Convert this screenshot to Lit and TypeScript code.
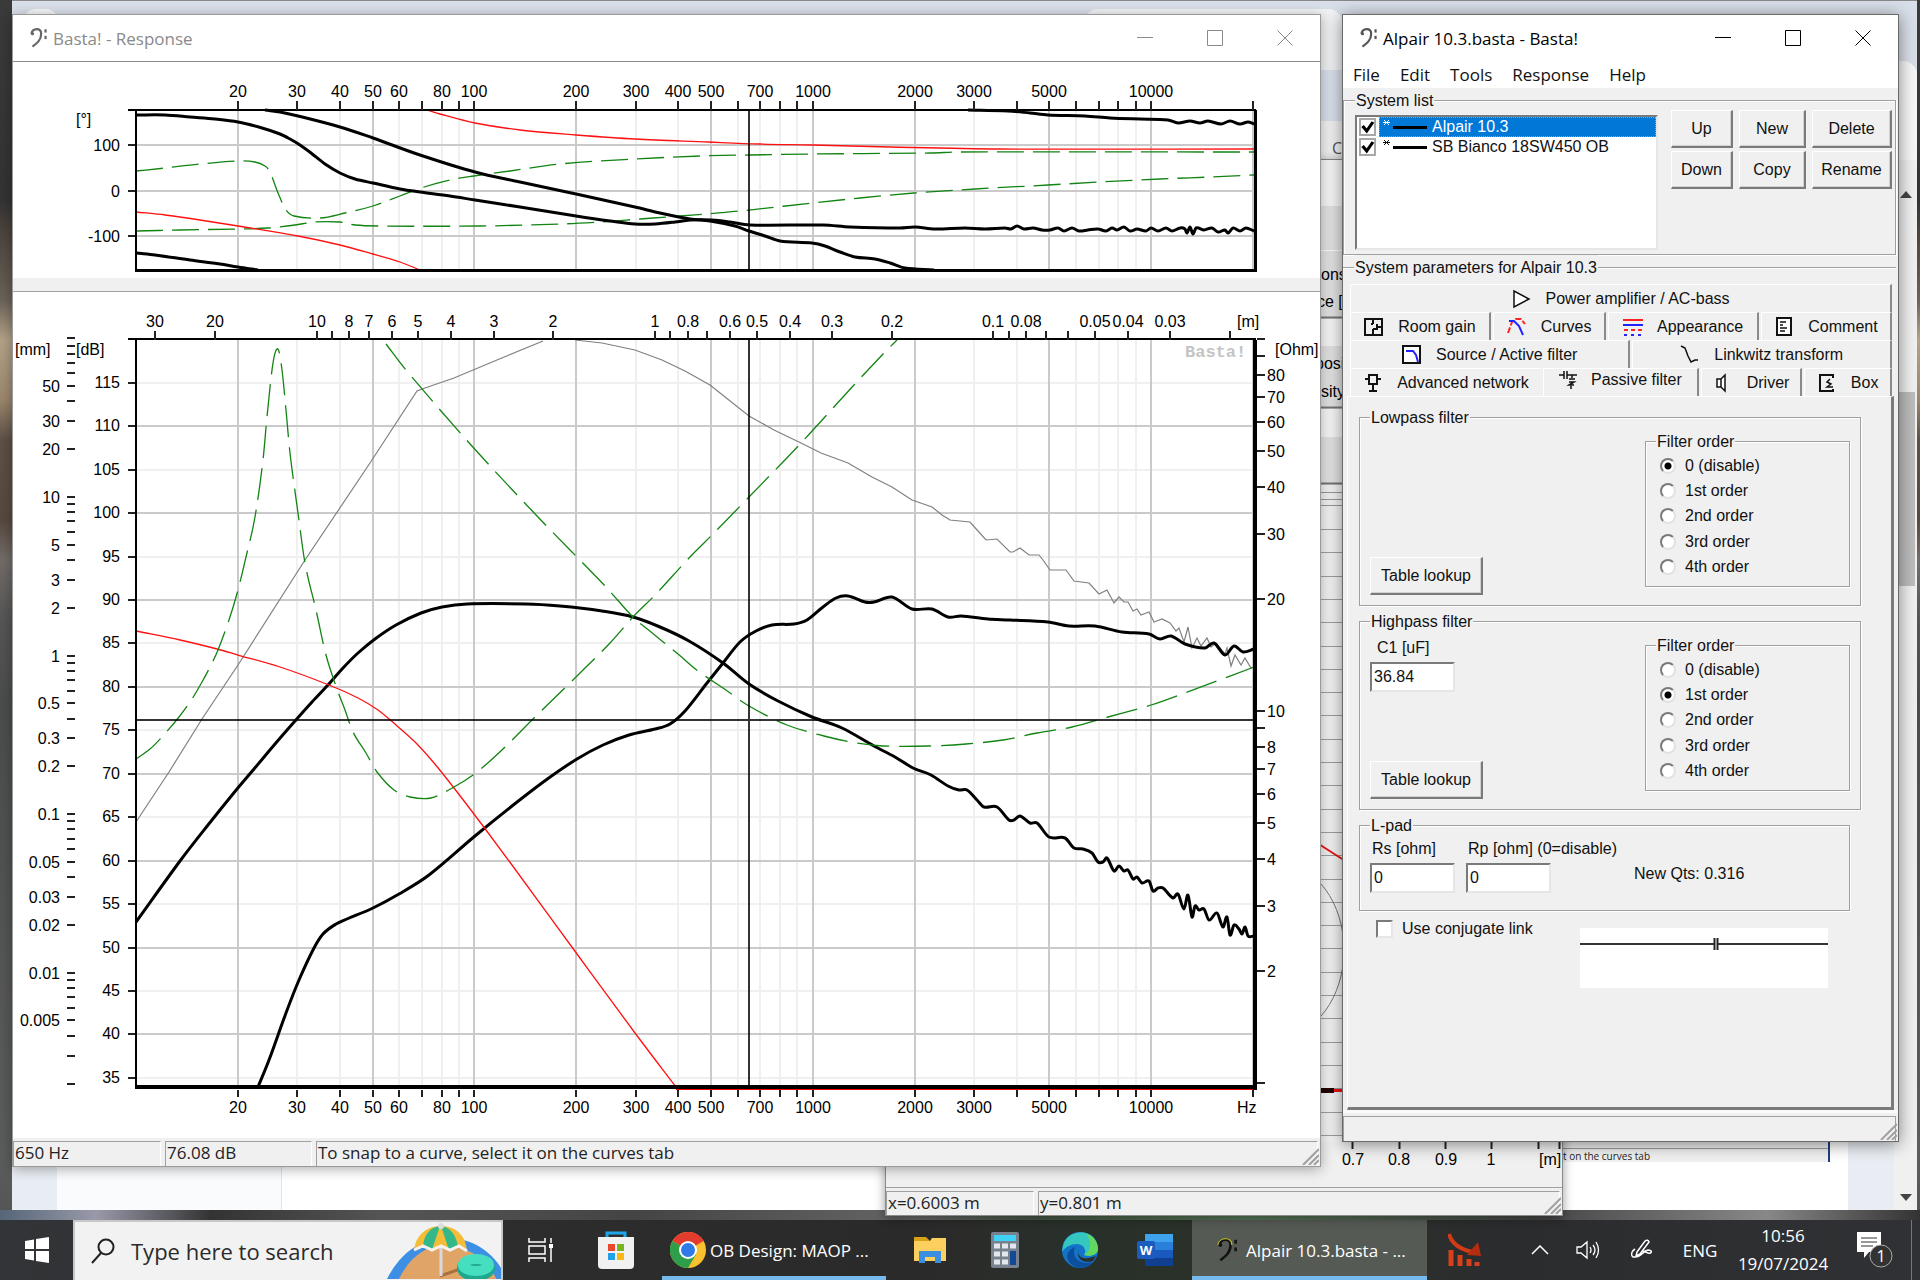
import { LitElement, html, svg, css } from "lit";
import { customElement } from "lit/decorators.js";

type Pt = [number, number];

/* ---------- scales shared by both charts ---------- */
const LEFT = 136;
const RIGHT = 1254;
const xf = (hz: number) => LEFT + 338.4 * Math.log10(hz / 10);
const xm = (m: number) => 655 - 338.4 * Math.log10(m);
const yDeg = (d: number) => 190.5 - d * 0.451;
const yDb = (d: number) => 382.7 + (115 - d) * 8.69;
const yMm = (v: number) => 655.5 - 158.6 * Math.log10(v);
const yOhm = (v: number) => 1083 - 372 * Math.log10(v);
const px = (v: number) => Math.round(v);

const decades = (from: number, to: number): number[] => {
  const out: number[] = [];
  for (let e = -3; e <= 4; e++)
    for (let k = 1; k <= 9; k++) {
      const v = k * 10 ** e;
      if (v >= from * 0.999 && v <= to * 1.001) out.push(v);
    }
  return out;
};

const FREQS = decades(20, 20000);
const FREQ_LABELS = [20, 30, 40, 50, 60, 80, 100, 200, 300, 400, 500, 700, 1000, 2000, 3000, 5000, 10000];
const isMajor = (f: number) => /^[125]/.test(String(f));

const P = (s: string): Pt[] => s.trim().split(/\s+/).map((p) => p.split(",").map(Number) as Pt);
const line = (pts: Pt[]) => "M" + pts.map((p) => p.join(" ")).join("L");
const curve = (pts: Pt[]) => {
  let d = `M${pts[0][0]} ${pts[0][1]}`;
  for (let i = 0; i < pts.length - 1; i++) {
    const a = pts[Math.max(0, i - 1)], b = pts[i], c = pts[i + 1], e = pts[Math.min(pts.length - 1, i + 2)];
    const lim = (c[0] - b[0]) / 3;
    const s1 = (c[1] - a[1]) / Math.max(1, c[0] - a[0]);
    const s2 = (e[1] - b[1]) / Math.max(1, e[0] - b[0]);
    d += `C${b[0] + lim} ${(b[1] + s1 * lim).toFixed(1)} ${c[0] - lim} ${(c[1] - s2 * lim).toFixed(1)} ${c[0]} ${c[1]}`;
  }
  return d;
};

/* ---------- phase curves ---------- */
const phaseBlack = [
  P("136,115 165,115 190,117 215,119 238,122 262,128 280,134 290,139 300,145 311,153 325,164 340,173 355,179 373,183 400,189 420,192 450,196 475,200 520,207 576,216 610,221 635,224 655,224 675,222 690,220 712,220 730,222 750,225 823,225 850,227 900,228 915,227 935,229 965,228 985,229 1005,228 1011,229 1017,226 1024,229 1033,228 1042,230 1050,230 1058,228 1064,231 1072,228 1079,231 1088,230 1098,229 1106,231 1112,228 1117,230 1124,227 1130,231 1137,229 1146,231 1151,228 1158,231 1166,228 1172,231 1180,228 1185,229 1187,233 1190,227 1193,234 1196,228 1204,230 1212,228 1218,232 1225,230 1228,233 1233,228 1240,231 1246,228 1254,231"),
  P("265,110 280,112 298,116 340,127 373,138 420,155 475,172 520,182 576,194 635,207 660,213 690,219 710,221 735,226 749,231 765,236 780,241 812,243 825,246 840,252 855,257 875,259 890,263 905,268 934,270"),
  P("136,253 155,255 190,260 220,264 238,267 258,270"),
  P("968,110 1008,111 1030,113 1048,115 1085,116 1110,118 1140,119 1168,120 1178,123 1190,121 1200,123 1208,121 1221,124 1230,121 1240,124 1248,122 1254,124"),
];
const phaseRed = [
  P("427,110 440,114 475,123 520,130 576,135 635,139 708,142 760,144 812,145 890,147 1000,149 1254,149"),
  P("136,212 165,215 200,220 238,226 298,236 340,245 373,254 400,262 420,270"),
];
const phaseGreen = [
  P("136,171 165,168 200,164 238,161 255,162 265,166 270,172 278,193 286,210 294,216 320,218 345,213 373,206 400,196 421,188 450,180 474,176 510,171 560,164 635,159 700,156 750,155 812,154 930,153 960,152 1254,152"),
  P("136,231 180,230 238,229 268,228 295,225 315,222 340,222 355,225 380,226 480,226 560,224 600,222 640,219 680,216 740,211 812,203 860,198 914,193 975,189 1048,185 1100,182 1160,179 1210,177 1254,175"),
];

/* ---------- response curves ---------- */
const spl = [
  P("136,922 180,861 208,825 237,789 254,769 275,744 295,721 312,702 328,685 343,668 358,653 375,639 396,625 421,613 442,607 467,604 526,604 560,606 602,611 633,617 660,627 689,641 723,663 749,684 778,701 812,717 842,728 874,746 895,757 913,768 931,775 948,786 959,790 967,790 977,800 984,807 997,807 1009,820 1014,820 1020,816 1030,823 1037,823 1049,837 1065,838 1074,848 1083,849 1092,853 1098,862 1103,862 1107,858 1114,871 1119,866 1124,871 1128,870 1133,879 1137,877 1142,883 1149,881 1153,891 1158,888 1163,888 1173,898 1178,894 1184,909 1188,895 1192,917 1195,906 1199,910 1204,909 1209,920 1217,913 1223,927 1227,917 1230,935 1234,925 1239,929 1242,934 1245,927 1248,936 1254,936"),
  P("258,1087 269,1060 286,1013 299,980 314,948 323,934 336,924 347,919 373,908 399,894 429,875 475,836 512,806 546,780 577,759 603,745 629,735 655,729 670,724 685,711 707,683 723,663 740,642 756,631 772,625 794,624 807,620 823,607 836,598 848,596 865,602 874,602 892,597 912,609 932,609 948,617 961,616 988,619 1010,620 1048,622 1069,626 1095,626 1122,632 1149,634 1160,639 1171,636 1185,644 1205,648 1214,643 1225,655 1234,646 1243,652 1254,649"),
];
const excursionGray = [
  P("136,822 169,772 202,719 238,665 305,560 370,463 417,391 425,388 454,378 497,360 543,341"),
  P("575,340 602,343 635,350 662,360 685,371 710,385 749,416 774,430 801,443 821,453 848,463 872,477 892,487 912,500 932,507 942,515 950,520 970,522 978,531 986,540 997,539 1010,552 1013,552 1020,548 1029,555 1039,555 1043,560 1050,570 1066,570 1074,581 1089,583 1099,594 1107,590 1114,603 1119,597 1124,602 1128,602 1133,611 1137,609 1141,615 1149,612 1154,622 1162,619 1170,623 1176,631 1179,628 1184,642 1188,627 1192,648 1197,638 1201,646 1207,638 1211,647 1216,643 1225,654 1227,648 1231,666 1235,655 1241,665 1245,658 1251,668 1254,667"),
];
const red = [P("136,631 180,640 217,649 238,655 280,667 329,685 358,698 378,710 396,725 416,743 434,763 454,788 486,830 512,865 577,954 635,1033 676,1087")];
const impedance = [
  P("136,759 150,749 162,737 179,717 192,699 202,682 210,667 218,650 229,620 238,590 246,557 255,517 263,460 267,417 273,363 278,349 282,370 286,410 290,453 298,513 305,563 316,610 326,655 337,689 345,710 353,732 366,753 377,772 394,790 410,797 431,798 454,787 477,772 503,749 534,718 577,676 610,643 633,617 656,594 689,558 714,533 749,497 801,443 854,385 885,352 897,340"),
  P("386,344 406,370 471,445 537,516 606,587 633,617 651,632 678,654 698,671 723,688 749,706 787,725 824,736 856,743 883,746 929,746 966,744 1003,740 1037,733 1072,727 1108,717 1151,705 1182,694 1254,667"),
];

const clef = (dark: string) => svg`
  <path d="M4 7C5 2 13 1 13 7c0 6-4 9-8 12" fill="none" stroke=${dark} stroke-width="2"/>
  <circle cx="5" cy="7" r="1.5" fill=${dark}/>
  <rect x="16" y="3" width="2" height="3" fill=${dark}/><rect x="16" y="9" width="2" height="3" fill=${dark}/>`;

const sharedStyles = css`
  :host { display: block; }
  * { box-sizing: border-box; }
  .title { display: flex; align-items: center; height: 46px; padding-left: 14px; background: #fff;
    font: 18px "Open Sans", "Noto Sans", sans-serif; }
  .title svg.clef { width: 24px; height: 28px; margin-right: 2px; }
  .title h1 { flex: 1; margin: 0; font-size: 17px; font-weight: 400; white-space: nowrap; }
  .caption { border: 0; padding: 0; background: none; width: 70px; height: 46px; color: inherit; }
  .caption svg { width: 16px; height: 16px; display: block; margin: 0 auto; }
  .status { display: flex; gap: 4px; padding: 3px 2px 0 0; background: #f0f0f0; height: 28px; position: relative;
    font: 17px "Open Sans", "Noto Sans", sans-serif; color: #222; }
  .cell { border-top: 1px solid #a0a0a0; border-left: 1px solid #a0a0a0; border-right: 1px solid #fff;
    padding-left: 1px; line-height: 22px; white-space: nowrap; }
  .cell.wide { flex: 1; }
  .grip { position: absolute; right: 1px; bottom: 1px; width: 18px; height: 18px; }
`;

const captions = html`
  <button class="caption" aria-label="Minimize"><svg viewBox="0 0 16 16"><path d="M0 7.500h16" stroke="currentColor"/></svg></button>
  <button class="caption" aria-label="Maximize"><svg viewBox="0 0 16 16"><path d="M.5.5h15v15H.5z" fill="none" stroke="currentColor"/></svg></button>
  <button class="caption" aria-label="Close"><svg viewBox="0 0 16 16"><path d="M.5.5l15 15M15.500.5l-15 15" stroke="currentColor"/></svg></button>`;

const grip = html`<svg class="grip" viewBox="0 0 18 18"><path d="M2 18L18 2M8 18L18 8M13 18l5-5" stroke="#a0a0a0" stroke-width="2"/></svg>`;

@customElement("response-window")
class ResponseWindow extends LitElement {
  static styles = [sharedStyles, css`
    .window { border: 1px solid #9a9a9a; background: #fff; box-shadow: 0 2px 12px #0005; }
    .title { color: #8a8a8a; border-bottom: 1px solid #8a8a8a; height: 47px; }
    .chart { display: block; width: 100%; height: auto; font: 16px "Liberation Sans", Arial, sans-serif; }
    .splitter { height: 14px; background: #f0f0f0; border-bottom: 1px solid #a0a0a0; }
    .minor { stroke: #f0f0f0; stroke-width: 2; }
    .major { stroke: #cacaca; stroke-width: 2; }
    .axis { stroke: #000; stroke-width: 2; }
    .tick { stroke: #222; stroke-width: 2; }
    .cursor { fill: none; stroke: #000; stroke-width: 2; stroke-opacity: 0.8; }
    .k { fill: none; stroke: #000; stroke-width: 3; stroke-linejoin: round; }
    .r { fill: none; stroke: #f11; stroke-width: 1.3; }
    .g { fill: none; stroke: #128412; stroke-width: 1.3; stroke-dasharray: 27 9; }
    .long { stroke-dasharray: 32 10; }
    .y { fill: none; stroke: #808080; stroke-width: 1.2; }
    .mid { text-anchor: middle; }
    .end { text-anchor: end; }
    .mark { fill: #c4c4c4; font: bold 17px "Liberation Mono", monospace; }
    .first { width: 148px; }
    .second { width: 147px; }
  `];

  private verticals(top: number, bottom: number) {
    const lines = (major: boolean) => FREQS.filter((f) => isMajor(f) === major)
      .map((f) => svg`<line class=${major ? "major" : "minor"} x1=${px(xf(f))} x2=${px(xf(f))} y1=${top} y2=${bottom} />`);
    return [lines(false), lines(true)];
  }

  private freqTicks(y1: number, y2: number, labelY: number) {
    return svg`
      ${FREQS.map((f) => svg`<line class="tick" x1=${px(xf(f))} x2=${px(xf(f))} y1=${y1} y2=${y2} />`)}
      ${FREQ_LABELS.map((f) => svg`<text class="mid" x=${px(xf(f))} y=${labelY}>${f}</text>`)}`;
  }

  private phaseChart() {
    return svg`<svg class="chart" viewBox="13 62 1307 216" role="img" aria-label="Phase response">
      ${this.verticals(110, 271)}
      ${[100, 0, -100].map((d) => svg`
        <line class="major" x1=${LEFT} x2=${RIGHT} y1=${px(yDeg(d))} y2=${px(yDeg(d))} />
        <line class="tick" x1="128" x2="136" y1=${px(yDeg(d))} y2=${px(yDeg(d))} />
        <text class="end" x="120" y=${px(yDeg(d)) + 6}>${d}</text>`)}
      ${phaseGreen.map((p) => svg`<path class="g" d=${curve(p)} />`)}
      ${phaseRed.map((p) => svg`<path class="r" d=${curve(p)} />`)}
      ${phaseBlack.map((p) => svg`<path class="k" d=${curve(p)} />`)}
      <line class="cursor" x1="749" x2="749" y1="110" y2="271" />
      <path class="axis" d="M128 110H1256M136 110V272" fill="none" />
      <path d="M135 270.500H1257M1255.500 110V272" stroke="#000" stroke-width="3" />
      ${this.freqTicks(101, 110, 97)}
      <text x="76" y="125">[°]</text>
    </svg>`;
  }

  private levelChart() {
    const top = 340, bottom = 1088;
    const dbs = Array.from({ length: 17 }, (_, i) => 35 + i * 5);
    const meters = decades(0.02, 30);
    const labelsM = [30, 20, 10, 8, 7, 6, 5, 4, 3, 2, 1, 0.8, 0.6, 0.5, 0.4, 0.3, 0.2, 0.1, 0.08, 0.05, 0.04, 0.03];
    const labelsMm = [50, 30, 20, 10, 5, 3, 2, 1, 0.5, 0.3, 0.2, 0.1, 0.05, 0.03, 0.02, 0.01, 0.005];
    return svg`<svg class="chart" viewBox="13 292 1307 846" role="img" aria-label="Sound pressure, excursion and impedance">
      ${dbs.filter((d) => d % 10).map((d) => svg`<line class="minor" x1=${LEFT} x2=${RIGHT} y1=${px(yDb(d))} y2=${px(yDb(d))} />`)}
      ${this.verticals(top, bottom)}
      ${dbs.map((d) => svg`
        ${d % 10 ? "" : svg`<line class="major" x1=${LEFT} x2=${RIGHT} y1=${px(yDb(d))} y2=${px(yDb(d))} />`}
        <line class="tick" x1="128" x2="136" y1=${px(yDb(d))} y2=${px(yDb(d))} />
        <text class="end" x="120" y=${px(yDb(d)) + 5}>${d}</text>`)}
      ${excursionGray.map((p) => svg`<path class="y" d=${line(p)} />`)}
      ${spl.map((p) => svg`<path class="k" d=${curve(p)} />`)}
      ${red.map((p) => svg`<path class="r" d=${curve(p)} />`)}
      ${impedance.map((p) => svg`<path class="g long" d=${curve(p)} />`)}
      <path class="axis" d="M128 339H1256M136 339V1089" fill="none" />
      <path d="M135 1087H1256" stroke="#000" stroke-width="4" />
      <path d="M676 1089.500H1256" stroke="#f00" stroke-width="1" />
      <path d="M1255 340V1090" stroke="#000" stroke-width="4" />
      <path class="cursor" d="M749 340V1088M136 720H1254" />
      ${this.freqTicks(1090, 1097, 1113)}
      <text x="1237" y="1113">Hz</text>
      ${meters.map((m) => svg`<line class="tick" x1=${px(xm(m))} x2=${px(xm(m))} y1="331" y2="340" />`)}
      ${labelsM.map((m) => svg`<text class="mid" x=${px(xm(m))} y="327">${m}</text>`)}
      <text x="1237" y="327">[m]</text>
      ${decades(0.002, 100).map((v) => svg`<line class="tick" x1="67" x2="75" y1=${px(yMm(v))} y2=${px(yMm(v))} />`)}
      ${labelsMm.map((v) => svg`<text class="end" x="60" y=${px(yMm(v)) + 6}>${v}</text>`)}
      <text x="15" y="355">[mm]</text><text x="76" y="355">[dB]</text>
      ${decades(1, 100).map((v) => svg`<line class="tick" x1="1257" x2="1265" y1=${px(yOhm(v))} y2=${px(yOhm(v))} />`)}
      ${[80, 70, 60, 50, 40, 30, 20, 10, 8, 7, 6, 5, 4, 3, 2].map((v) => svg`<text x="1267" y=${px(yOhm(v)) + 6}>${v}</text>`)}
      <text x="1275" y="355">[Ohm]</text>
      <text class="mark" x="1185" y="357">Basta!</text>
    </svg>`;
  }

  render() {
    return html`<section class="window">
      <header class="title"><svg class="clef" viewBox="0 0 22 22">${clef("#666")}</svg><h1>Basta! - Response</h1>${captions}</header>
      ${this.phaseChart()}
      <div class="splitter"></div>
      ${this.levelChart()}
      <footer class="status"><div class="cell first">650 Hz</div><div class="cell second">76.08 dB</div>
        <div class="cell wide">To snap to a curve, select it on the curves tab</div>${grip}</footer>
    </section>`;
  }
}

/* ---------- tab icons, 20 x 20 ---------- */
const ic = {
  amp: svg`<path d="M3 2v16L18 10z" fill="#fff" stroke="#111" stroke-width="1.5"/>`,
  room: svg`<path d="M1 2h17v16H1zM9 2v5M9 12v6M9 12h3M9 7H7M18 10h-5M13 7v6" fill="none" stroke="#111" stroke-width="2"/>`,
  curves: svg`<path d="M1 16L5 5 9 2h5l4 5" fill="none" stroke="#f22" stroke-width="2" stroke-dasharray="6 2"/><path d="M2 4h5l5 5 4 9" fill="none" stroke="#22f" stroke-width="2"/>`,
  appearance: svg`<path d="M0 3h20" stroke="#f22" stroke-width="2"/><path d="M0 8h20" stroke="#22f" stroke-width="2"/><path d="M1 13h18" stroke="#f22" stroke-width="2" stroke-dasharray="4 3"/><path d="M1 18h18" stroke="#22f" stroke-width="2" stroke-dasharray="3 4"/>`,
  comment: svg`<path d="M3 1h14v17H3z" fill="#fff" stroke="#111" stroke-width="2"/><path d="M6 5h6M6 8h3M6 11h7M6 14h5" stroke="#111" stroke-width="1.5"/>`,
  source: svg`<path d="M1 1h17v17H1z" fill="#fff" stroke="#111" stroke-width="2"/><path d="M4 6h7l3 4 2 7" fill="none" stroke="#22f" stroke-width="2"/>`,
  linkwitz: svg`<path d="M1 1l4 2 3 8 3 6 4-2h3" fill="none" stroke="#111" stroke-width="1.5"/>`,
  network: svg`<path d="M6 2h8v9H6zM2 6h4M14 6h4M10 11v7M6 18h8" fill="none" stroke="#111" stroke-width="2"/>`,
  passive: svg`<path d="M0 5h5M5 1v8M8 1v8M8 5h10M13 5v3M10 9h6M10 12h5l-5 3h5M12 16v3" fill="none" stroke="#111" stroke-width="1.5"/>`,
  driver: svg`<path d="M4 6h4v8H4zM8 6l4-4v16l-4-4" fill="#fff" stroke="#111" stroke-width="1.5"/>`,
  box: svg`<path d="M16 5V2H3v16h13v-2" fill="none" stroke="#111" stroke-width="2"/><path d="M13 6l-3 3 4 2-4 3h6" fill="none" stroke="#111" stroke-width="1.5"/>`,
};
const TABS: [string, ReturnType<typeof svg>, string][][] = [
  [["Power amplifier / AC-bass", ic.amp, "t12"]],
  [["Room gain", ic.room, "t3"], ["Curves", ic.curves, "t2"], ["Appearance", ic.appearance, "t4"], ["Comment", ic.comment, "t9"]],
  [["Source / Active filter", ic.source, "t12"], ["Linkwitz transform", ic.linkwitz, "t11"]],
  [["Advanced network", ic.network, "t8"], ["Passive filter", ic.passive, "t6 on"], ["Driver", ic.driver, "t5"], ["Box", ic.box, "t1"]],
];
const ORDERS = ["0 (disable)", "1st order", "2nd order", "3rd order", "4th order"];

@customElement("system-window")
class SystemWindow extends LitElement {
  static styles = [sharedStyles, css`
    .window { border: 1px solid #6a6a6a; background: #f0f0f0; box-shadow: 0 2px 16px #0007;
      font: 16px "Liberation Sans", Arial, sans-serif; color: #111; }
    button, input { font: inherit; color: inherit; }
    .title { color: #000; }
    .menu { display: flex; gap: 20px; padding: 0 10px; height: 27px; background: #fff;
      font: 17px/28px "Open Sans", "Noto Sans", sans-serif; }
    .menu button { border: 0; padding: 0; background: none; line-height: 26px; }
    fieldset { min-width: 0; margin: 0; padding: 0; border: 1px solid #a0a0a0; box-shadow: 1px 1px #fff, inset 1px 1px #fff; }
    legend { padding: 2px 1px 0; margin-left: 0; line-height: 22px; background: #f0f0f0; }
    .list { display: flex; gap: 13px; padding: 3px 3px 4px 11px; margin-right: 2px; }
    .listbox { flex: 1; height: 135px; margin: 0; padding: 0 0 0 2px; list-style: none; background: #fff;
      border: 2px solid #7a7a7a; border-right-color: #e6e6e6; border-bottom-color: #e6e6e6; }
    .item { display: flex; align-items: center; height: 20px; }
    .item label { flex: 1; display: flex; align-items: center; height: 20px; margin-left: 3px; border: 1px solid transparent; }
    .item.sel label { background: #0078d7; color: #fff; border: 1px dotted #e8922a; }
    .star { width: 10px; height: 8px; margin: 0 1px 6px 2px; }
    .swatch { width: 34px; height: 3px; margin: 0 5px 0 0; background: #000; }
    .tick { appearance: none; margin: 0; width: 17px; height: 18px; background: #fff; border: 2px solid #a8a8a8; }
    .tick:checked { background: #fff url("data:image/svg+xml,%3Csvg xmlns='http://www.w3.org/2000/svg' viewBox='0 0 14 14'%3E%3Cpath d='M2 6l4 5 6-9' fill='none' stroke='%23000' stroke-width='3'/%3E%3C/svg%3E") center / 14px no-repeat; }
    .buttons { display: grid; grid-template-columns: 62px 67px 80px; grid-auto-rows: 38px; gap: 3px 6px; margin-top: -5px; }
    .push { border: 1px solid #fff; border-right: 2px solid #7a7a7a; border-bottom: 2px solid #7a7a7a; padding: 0;
      background: #f0f0f0; box-shadow: inset -1px -1px #d0d0d0; }
    .params { border-width: 1px 0 0; box-shadow: inset 0 1px #fff; padding: 5px 2px 0 4px; margin: 0 2px 0 0; }
    .params > legend { margin-left: 7px; }
    .tabrow { display: flex; height: 28px; gap: 2px; padding: 0 2px 0 3px; }
    .tab { display: flex; align-items: center; justify-content: center; gap: 14px; padding: 0; border: 0; background: #f0f0f0;
      border-top: 1px solid #fff; border-left: 1px solid #fff; border-right: 2px solid #8a8a8a; white-space: nowrap; }
    .tab svg { width: 20px; height: 20px; }
    .on { gap: 12px; padding-bottom: 6px; }
    .t12 { flex: 280; } .t11 { flex: 259; } .t3 { flex: 141; } .t2 { flex: 113; } .t4 { flex: 151; } .t9 { flex: 131; }
    .t8 { flex: 195; border-right-width: 0; } .t6 { flex: 157; } .t5 { flex: 101; } .t1 { flex: 87; }
    .panel { height: 714px; padding: 8px 30px 0 11px; border: 1px solid #fff; border-right: 3px solid #7a7a7a; border-bottom: 3px solid #7a7a7a; }
    .group { display: flex; justify-content: space-between; height: 201px; margin-bottom: 3px; padding: 0 10px; }
    .left { display: flex; flex-direction: column; align-items: flex-start; height: 166px; }
    .left .push { width: 113px; height: 38px; margin-top: auto; }
    .left label { padding: 5px 0 4px 7px; line-height: 20px; }
    .field { width: 85px; height: 30px; padding: 0 2px; border: 2px solid #7a7a7a; border-right-color: #e6e6e6;
      border-bottom-color: #e6e6e6; background: #fff; border-radius: 0; }
    .order { width: 205px; height: 158px; }
    .order legend { margin-left: 10px; }
    .orders { display: grid; height: 127px; margin-left: 14px; }
    .orders label { display: flex; align-items: center; gap: 9px; }
    .radio { appearance: none; margin: 0; width: 16px; height: 16px; border-radius: 50%; background: #fff;
      border: 2px solid #7a7a7a; border-right-color: #e2e2e2; border-bottom-color: #e2e2e2; }
    .radio:checked { background: radial-gradient(circle, #000 0 3px, #fff 4px); }
    .lpad { display: flex; align-items: flex-start; gap: 12px; height: 98px; margin-right: 11px; padding: 1px 10px 0; }
    .lpad label { display: flex; flex-direction: column; gap: 3px; width: 84px; white-space: nowrap; line-height: 22px; }
    .lpad span { padding-left: 2px; }
    .qts { margin: 24px 0 0 72px; line-height: 24px; }
    .link { display: flex; justify-content: space-between; padding: 8px 33px 0 17px; }
    .link label { display: flex; gap: 9px; height: 19px; align-items: center; }
    .link .tick { border-color: #7a7a7a #e6e6e6 #e6e6e6 #7a7a7a; }
    .schematic { width: 248px; height: 60px; margin-top: 9px; background: #fff; }
    .status .cell { border-color: #a0a0a0; }
    .gap { height: 3px; background: #fafafa; }
  `];

  private item(name: string, selected: boolean, id: string) {
    return html`<li class="item ${selected ? "sel" : ""}"><input class="tick" type="checkbox" id=${id} checked />
      <label for=${id}><svg class="star" viewBox="0 0 10 8"><path d="M2 0l5 5M7 0L2 5M1 2.500h7" stroke="currentColor"/></svg>
      <span class="swatch"></span>${name}</label></li>`;
  }

  private order(name: string, active: number) {
    return html`<fieldset class="order"><legend>Filter order</legend><div class="orders">
      ${ORDERS.map((o, i) => html`<label><input class="radio" type="radio" name=${name} ?checked=${i === active} />${o}</label>`)}
    </div></fieldset>`;
  }

  render() {
    return html`<section class="window">
      <header class="title"><svg class="clef" viewBox="0 0 22 22">${clef("#555")}</svg><h1>Alpair 10.3.basta - Basta!</h1>${captions}</header>
      <nav class="menu">${["File", "Edit", "Tools", "Response", "Help"].map((m) => html`<button>${m}</button>`)}</nav>
      <fieldset class="list"><legend>System list</legend>
        <ul class="listbox">${this.item("Alpair 10.3", true, "sys1")}${this.item("SB Bianco 18SW450 OB", false, "sys2")}</ul>
        <div class="buttons">${["Up", "New", "Delete", "Down", "Copy", "Rename"].map((b) => html`<button class="push">${b}</button>`)}</div>
      </fieldset>
      <fieldset class="params"><legend>System parameters for Alpair 10.3</legend>
        <div role="tablist">${TABS.map((row) => html`<div class="tabrow">${row.map(([name, icon, cls]) =>
          html`<button class="tab ${cls}" role="tab"><svg viewBox="0 0 20 20">${icon}</svg>${name}</button>`)}</div>`)}</div>
        <div class="panel">
          <fieldset class="group"><legend>Lowpass filter</legend>
            <div class="left"><button class="push">Table lookup</button></div>${this.order("low", 0)}</fieldset>
          <fieldset class="group"><legend>Highpass filter</legend>
            <div class="left"><label for="c1">C1 [uF]</label><input class="field" id="c1" value="36.84" /><button class="push">Table lookup</button></div>
            ${this.order("high", 1)}</fieldset>
          <fieldset class="lpad"><legend>L-pad</legend>
            <label><span>Rs [ohm]</span><input class="field" value="0" /></label>
            <label><span>Rp [ohm] (0=disable)</span><input class="field" value="0" /></label>
            <div class="qts">New Qts: 0.316</div></fieldset>
          <div class="link"><label><input class="tick" type="checkbox" />Use conjugate link</label>
            <svg class="schematic" viewBox="0 0 248 60"><path d="M0 16h134M138 16h110" stroke="#333" stroke-width="2"/><path d="M134.500 10v12M137.500 10v12" stroke="#222" stroke-width="2"/></svg></div>
        </div>
      </fieldset>
      <div class="gap"></div>
      <footer class="status"><div class="cell wide"></div>${grip}</footer>
    </section>`;
  }
}

@customElement("layout-window")
class LayoutWindow extends LitElement {
  static styles = [sharedStyles, css`
    .window { border: 1px solid #8a8a8a; border-top: 0; background: #f0f0f0; box-shadow: 0 2px 10px #0006; }
    .plan { display: block; width: 100%; height: auto; font: 16px "Liberation Sans", Arial, sans-serif; }
    .mid { text-anchor: middle; }
    .first { width: 148px; }
    .status { border-top: 1px solid #a0a0a0; }
  `];
  render() {
    const rules = Array.from({ length: 27 }, (_, i) => Math.round(529 + i * 23.3));
    return html`<section class="window"><svg class="plan" viewBox="886 160 676 1027" role="img" aria-label="Baffle plan">
      <rect x="886" y="160" width="676" height="46" fill="#f8f8f8"/><rect x="886" y="206" width="676" height="350" fill="#e4e4e4"/>
      <path d="M886 250.500h676" stroke="#fff"/><path d="M886 317.500h676M886 407.500h676M886 483.500h676" stroke="#777" stroke-width="2"/>
      <rect x="886" y="319" width="676" height="27" fill="#f8f8f8"/><rect x="886" y="409" width="676" height="28" fill="#f8f8f8"/>
      <rect x="886" y="485" width="676" height="657" fill="#f4f4f4"/>
      <path d="M886 492.500h676M886 499.500h676M886 505.500h676" stroke="#999"/>
      ${rules.map((y) => svg`<path d="M886 ${y + 0.5}H1562" stroke="#a0a0a0"/>`)}
      <text x="1321" y="280">ons</text><text x="1317" y="307">ce [</text><text x="1315" y="369">posi</text><text x="1321" y="397">sity</text>
      <path d="M1300 832L1350 864" stroke="#e11" stroke-width="2"/>
      <ellipse cx="1280" cy="950" rx="64" ry="86" fill="none" stroke="#777"/>
      <path d="M1321 1090.500h40" stroke="#e11" stroke-width="3"/><path d="M1321 1090.500h13" stroke="#200" stroke-width="5"/>
      <rect x="886" y="1142" width="676" height="45" fill="#f0f0f0"/>
      <path d="M1352.500 1140v9M1399.500 1140v9M1445.500 1140v9M1491.500 1140v9M1538.500 1140v9M1559.500 1140v9" stroke="#222" stroke-width="2"/>
      <text class="mid" x="1353" y="1165">0.7</text><text class="mid" x="1399" y="1165">0.8</text><text class="mid" x="1446" y="1165">0.9</text>
      <text class="mid" x="1491" y="1165">1</text><text x="1539" y="1165">[m]</text>
    </svg><footer class="status"><div class="cell first">x=0.6003 m</div><div class="cell wide">y=0.801 m</div>${grip}</footer></section>`;
  }
}

@customElement("task-bar")
class TaskBar extends LitElement {
  static styles = css`
    :host { display: block; }
    * { box-sizing: border-box; }
    .bar { display: flex; height: 60px; background: linear-gradient(90deg, #323437, #2e2d2d 25%, #2b2a2a 48%, #29302a 56%, #2a3228 68%, #2b2c2e 78%, #303134);
      color: #fff; font: 17px "Open Sans", "Noto Sans", sans-serif; }
    button { display: flex; align-items: center; justify-content: center; padding: 0; border: 0; background: none; color: inherit; font: inherit; }
    .pin { width: 75px; }
    .start { width: 73px; }
    .search { display: flex; align-items: center; width: 430px; background: #f2f2f2; border: 2px solid #c8c8c8; border-bottom: 0; color: #222; padding-left: 14px; }
    .search input { flex: 1; min-width: 0; border: 0; background: none; outline: none; font: 22px "Open Sans", "Noto Sans", sans-serif; padding: 0; margin-left: 14px; }
    .search input::placeholder { color: #2b2b2b; opacity: 1; }
    .task { gap: 4px; border-bottom: 4px solid #76b9ed; padding: 4px 8px 0; white-space: nowrap; justify-content: flex-start; }
    .chrome { width: 224px; margin: 0 6px 0 9px; }
    .app { width: 235px; background: #565a55; padding-left: 22px; }
    .tray { display: flex; margin-left: auto; }
    .small { width: 48px; } .pen { width: 60px; } .lang { width: 56px; } .bell { width: 73px; }
    .clock { width: 110px; flex-direction: column; line-height: 28px; }
    .peek { width: 9px; border-left: 1px solid #777; }
  `;
  render() {
    return html`<nav class="bar">
      <button class="start" aria-label="Start"><svg width="26" height="26" viewBox="0 0 26 26"><path d="M1 4l9-1.500V12H1zM12 2l13-2v12H12zM1 14h9v9.500L1 22zM12 14h13v12l-13-2z" fill="#fff"/></svg></button>
      <div class="search"><svg width="28" height="28" viewBox="0 0 28 28"><circle cx="17" cy="10" r="7.500" fill="none" stroke="#222" stroke-width="2"/><path d="M12 16L3 26" stroke="#222" stroke-width="2"/></svg>
        <input placeholder="Type here to search" aria-label="Type here to search" />
        <svg width="114" height="56" viewBox="387 1222 114 56"><path d="M387 1278c14-28 36-41 60-41 26 0 44 14 54 30v11z" fill="#3d8fe6"/><path d="M398 1280c12-26 30-36 48-36 24 2 44 16 52 38z" fill="#e0a566"/><path d="M440 1275l26-9" stroke="#a8713f" stroke-width="3"/>
          <path d="M441 1230v45" stroke="#d8d8e0" stroke-width="3"/><path d="M414 1249c2-16 14-24 27-24 14 0 25 9 26 25l-8-5-9 4-9-4-9 4-9-4z" fill="#f3bd38"/><path d="M423 1245c1-12 8-19 17-20l-8 24zM441 1225c9 1 15 9 17 20l-9 4z" fill="#35b889"/><path d="M414 1249l9-4 9 4 9-4 9 4 9-4 8 5" fill="none" stroke="#f5f1ee" stroke-width="3"/><circle cx="441" cy="1225" r="3" fill="#ddd"/>
          <ellipse cx="476" cy="1267" rx="13" ry="7" fill="none" stroke="#1ea88d" stroke-width="12"/><ellipse cx="476" cy="1264" rx="13" ry="6" fill="none" stroke="#45dfc0" stroke-width="10"/></svg></div>
      <button class="pin" aria-label="Task View"><svg width="26" height="24" viewBox="0 0 26 24"><path d="M1 0v4h16V0M1 24v-4h16v4M1 8h16v8H1zM23 0v5M23 8v16" fill="none" stroke="#fff" stroke-width="1.500"/><path d="M23 6v4" stroke="#fff" stroke-width="4"/></svg></button>
      <button class="pin" aria-label="Microsoft Store"><svg width="36" height="38" viewBox="0 0 36 38"><path d="M9 7V2h18v5" fill="none" stroke="#1ea5ec" stroke-width="3"/><path d="M0 6h36v28q0 4-4 4H4q-4 0-4-4z" fill="#f1f1f1"/><path fill="#e8482c" d="M10 13h7v7h-7z"/><path fill="#7ab51d" d="M19 13h7v7h-7z"/><path fill="#22a0e8" d="M10 22h7v7h-7z"/><path fill="#f9b813" d="M19 22h7v7h-7z"/></svg></button>
      <button class="task chrome"><svg width="36" height="36" viewBox="0 0 36 36"><circle cx="18" cy="18" r="18" fill="#fbc02d"/><path d="M18 18L2.400 9A18 18 0 0 1 33.600 9z" fill="#e33b2e"/><path d="M18 18L2.400 9A18 18 0 0 0 18 36l8-13.500z" fill="#2e9e4b"/><path d="M18 9h15.600A18 18 0 0 0 18 0z" fill="#e33b2e"/><circle cx="18" cy="18" r="9" fill="#fff"/><circle cx="18" cy="18" r="7" fill="#2f79e8"/></svg>OB Design: MAOP ...</button>
      <button class="pin" aria-label="File Explorer"><svg width="32" height="28" viewBox="0 0 32 28"><path d="M0 1h12l4 4H0z" fill="#d9a116"/><path d="M0 5h16l2-3h14v23H0z" fill="#fcd05e"/><path d="M5 27V15h22v12h-6v-6H11v6z" fill="#3c8ee0"/></svg></button>
      <button class="pin" aria-label="Calculator"><svg width="28" height="36" viewBox="0 0 28 36"><rect width="28" height="36" rx="2" fill="#78828f"/><path fill="#3fd0f5" d="M3 3h22v6H3z"/><path d="M3 14h22M3 22h15M3 30h15" stroke="#e3e6ea" stroke-width="5" stroke-dasharray="6 2"/><path fill="#134a93" d="M19 19h6v14h-6z"/></svg></button>
      <button class="pin" aria-label="Edge"><svg width="36" height="36" viewBox="0 0 36 36"><circle cx="18" cy="18" r="18" fill="#1373c8"/><path d="M1 14C5-4 34-5 36 16c0 7-8 9-14 7 3-4 0-11-7-11-6 0-12 3-15 8z" fill="#35c6c0"/><path d="M24 2c8 2 12 9 12 15 0 6-8 8-14 6 8-5 8-14 2-21z" fill="#63d860"/><path d="M13 15c-4 10 4 19 18 15-6 7-17 8-23 1-5-6-3-13 5-16z" fill="#0c4f9c"/><path d="M17 17c-3 5 2 11 10 9l7-2-3 5c-9 3-18-2-14-12z" fill="#2b2f2c"/></svg></button>
      <button class="pin" aria-label="Word"><svg width="36" height="32" viewBox="0 0 36 32"><path fill="#3fa2ec" d="M8 0h28v9H8z"/><path fill="#2a7fd8" d="M8 8h28v8H8z"/><path fill="#185abd" d="M8 16h28v8H8z"/><path fill="#103f91" d="M8 24h28v8H8z"/><rect y="7" width="18" height="18" rx="2" fill="#1b5cbe"/><text x="9" y="21" text-anchor="middle" font-family="Open Sans" font-weight="700" font-size="13" fill="#fff">W</text></svg></button>
      <button class="task app"><svg width="28" height="30" viewBox="0 0 22 22"><g>${clef("#111")}</g><path d="M3 7C4 1 14 0 14 7" fill="none" stroke="#b5b52a" stroke-width="1"/></svg>Alpair 10.3.basta - ...</button>
      <button class="pin" aria-label="Chart tool"><svg width="34" height="34" viewBox="0 0 34 34"><path d="M1 1c3 10 12 16 25 18" fill="none" stroke="#d33b16" stroke-width="4"/><path d="M30 9l3 14-14-1z" fill="#b52d10"/><path d="M3 17v16M12 22v11M21 26v7M29 29v4" stroke="#d8401a" stroke-width="5"/></svg></button>
      <div class="tray">
        <button class="small" aria-label="Show hidden icons"><svg width="18" height="10" viewBox="0 0 18 10"><path d="M1 9l8-8 8 8" fill="none" stroke="#fff" stroke-width="1.500"/></svg></button>
        <button class="small" aria-label="Volume"><svg width="24" height="20" viewBox="0 0 24 20"><path d="M1 7h4l6-5v16l-6-5H1zM14 7q2 3 0 6M17 5q4 5 0 10M20 2q5 8 0 16" fill="none" stroke="#fff" stroke-width="1.300"/></svg></button>
        <button class="pen" aria-label="Pen"><svg width="22" height="22" viewBox="0 0 22 22"><path d="M6 13L14 2q3-2 4 1L9 15l-4 2zM4 10c-5 3-4 9 0 8 6 0 8-6 13-7 5 0 4 4 0 3l-5-2" fill="none" stroke="#fff" stroke-width="1.500"/></svg></button>
        <button class="lang">ENG</button>
        <button class="clock"><span>10:56</span><span>19/07/2024</span></button>
        <button class="bell" aria-label="Notifications"><svg width="36" height="36" viewBox="0 0 36 36"><path d="M0 0h24v20H12l-5 6v-6H0z" fill="#fff"/><path d="M4 6h16M4 10h16M4 14h12" stroke="#333"/><circle cx="24" cy="24" r="11" fill="#333" stroke="#aaa"/><text x="24" y="30" text-anchor="middle" font-family="Open Sans" font-size="16" fill="#fff">1</text></svg></button>
        <div class="peek"></div>
      </div></nav>`;
  }
}

@customElement("app-root")
class AppRoot extends LitElement {
  static styles = css`
    :host { display: block; }
    * { box-sizing: border-box; }
    .desktop { position: relative; overflow: hidden; min-height: 100vh; display: flex; flex-direction: column;
      background: linear-gradient(180deg, #3a3a3a, #333 200px, #4a423c 230px, #6b6258 300px, #b3a287 340px, #9a866c 400px, #5d5046 440px, #57493f 520px, #726c68 560px, #555 620px, #4b4d4c 700px, #5b5d5c 1160px, #4c4b4b); }
    .browser { flex: 1; position: relative; margin: 0 3px 0 12px; display: flex; flex-direction: column; background: #fff; border-top: 1px solid #888; }
    .strip { height: 69px; background: #d9dfe9; position: relative; }
    .active { position: absolute; left: 12px; top: 8px; width: 34px; height: 61px; border-radius: 12px; background: #f6f7f9; }
    .second { position: absolute; right: 575px; left: 1072px; top: 8px; border-radius: 14px 14px 0 0; height: 61px; background: #f2f3f5; }
    .nav { height: 51px; background: #dbe2ee; }
    .marks { height: 39px; background: #f3f3f3; border-bottom: 1px solid #999; color: #555; text-align: right; padding: 16px 575px 0 0; font: 16px "Open Sans", sans-serif; }
    .right { position: absolute; right: 0; top: 60px; width: 60px; height: 121px; background: #f6f6f6; border-bottom: 1px solid #ddd; border-radius: 0 14px 0 0; }
    .page { flex: 1; display: flex; }
    .rail { width: 45px; background: #e8edf3; }
    .side { width: 225px; background: #f9fbfd; border-right: 1px solid #dfe6ea; }
    .body { flex: 1; }
    .margin { width: 46px; background: #e9edf3; }
    .scroll { width: 23px; background: #f0f0f0; display: flex; flex-direction: column; justify-content: space-between; align-items: center; padding: 31px 0 9px; position: relative; }
    .scroll i { position: absolute; top: 232px; left: 2px; right: 2px; height: 194px; background: #bdbdbd; }
    .wall { height: 10px; background: linear-gradient(90deg, #567, #99a 5%, #333 11%, #555 20%, #444 33%, #666 48%, #454 54%, #575 65%, #444 80%, #888 92%, #333); }
    .remnant { position: absolute; right: 90px; top: 1140px; width: 270px; height: 22px; border-right: 2px solid #1f3f7c; background: #f0f0f0; font: 10px "Open Sans", sans-serif; color: #222; padding-left: 3px; }
    .remnant span { display: block; margin-top: 8px; border-top: 1px solid #999; line-height: 14px; }
    layout-window { position: absolute; left: 885px; right: 357px; top: 160px; }
    .w1 { position: absolute; left: 12px; right: 599px; top: 14px; }
    .w2 { position: absolute; right: 21px; top: 14px; width: 557px; }
  `;
  render() {
    const arrow = (d: string) => html`<svg width="12" height="8" viewBox="0 0 12 8"><path d=${d} fill="#444" /></svg>`;
    return html`<main class="desktop">
      <div class="browser">
        <div class="strip"><div class="active"></div><div class="second"></div></div><div class="nav"></div><div class="marks">C</div>
        <div class="right"></div>
        <div class="page"><div class="rail"></div><div class="side"></div><div class="body"></div><div class="margin"></div>
          <div class="scroll">${arrow("M6 0l6 7H0z")}<i></i>${arrow("M6 8l6-7H0z")}</div></div>
      </div>
      <div class="wall"></div>
      <div class="remnant"><span>t on the curves tab</span></div>
      <layout-window></layout-window>
      <response-window class="w1"></response-window>
      <system-window class="w2"></system-window>
      <task-bar></task-bar>
    </main>`;
  }
}
